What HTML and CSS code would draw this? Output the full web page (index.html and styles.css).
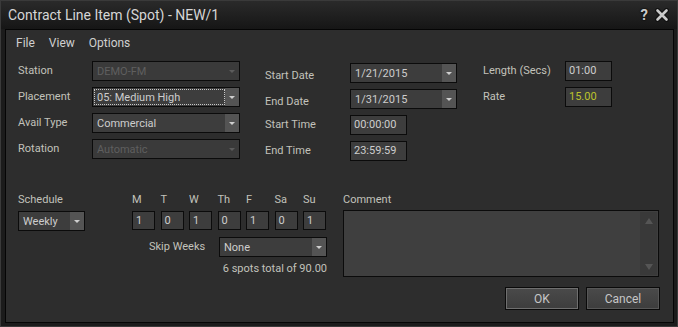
FILE: index.html
```html
<!DOCTYPE html>
<html lang="en">
<head>
    <meta charset="UTF-8">
    <title>Contract Line Item (Spot) - NEW/1</title>
    <link rel="stylesheet" href="styles.css">
</head>
<body>
    <div class="window">
        <div class="titlebar">
            <span class="title">Contract Line Item (Spot) - NEW/1</span>
            <div class="caption-btns">
                <span class="help">?</span>
                <svg class="close" width="14" height="14" viewBox="0 0 14 14">
                    <path d="M2.5 2.5 L11.5 11.5 M11.5 2.5 L2.5 11.5" stroke="#111" stroke-width="5" stroke-linecap="round"/>
                    <path d="M2.5 2.5 L11.5 11.5 M11.5 2.5 L2.5 11.5" stroke="#c9c9c9" stroke-width="2.6" stroke-linecap="round"/>
                </svg>
            </div>
        </div>
        <div class="client">
            <div class="menu">
                <span>File</span>
                <span>View</span>
                <span>Options</span>
            </div>

            <div class="fields">
                <div class="grid grid-a">
                    <span class="lbl">Station</span>
                    <div class="combo disabled"><span class="val">DEMO-FM</span><span class="arrow"></span></div>
                    <span class="lbl">Placement</span>
                    <div class="combo"><span class="val focus">05: Medium High</span><span class="arrow"></span></div>
                    <span class="lbl">Avail Type</span>
                    <div class="combo"><span class="val">Commercial</span><span class="arrow"></span></div>
                    <span class="lbl">Rotation</span>
                    <div class="combo disabled"><span class="val">Automatic</span><span class="arrow"></span></div>
                </div>
                <div class="grid grid-b">
                    <span class="lbl low">Start Date</span>
                    <div class="combo"><span class="val">1/21/2015</span><span class="arrow"></span></div>
                    <span class="lbl low">End Date</span>
                    <div class="combo"><span class="val">1/31/2015</span><span class="arrow"></span></div>
                    <span class="lbl">Start Time</span>
                    <div class="textbox time">00:00:00</div>
                    <span class="lbl">End Time</span>
                    <div class="textbox time">23:59:59</div>
                </div>
                <div class="grid grid-c">
                    <span class="lbl">Length (Secs)</span>
                    <div class="textbox">01:00</div>
                    <span class="lbl">Rate</span>
                    <div class="textbox rate">15.00</div>
                </div>
            </div>

            <div class="lower">
                <div class="schedule">
                    <span class="lbl">Schedule</span>
                    <div class="combo"><span class="val">Weekly</span><span class="arrow"></span></div>
                </div>
                <div class="days">
                    <div class="day-grid">
                        <span class="lbl">M</span><span class="lbl">T</span><span class="lbl">W</span><span class="lbl">Th</span><span class="lbl">F</span><span class="lbl">Sa</span><span class="lbl">Su</span>
                        <div class="textbox day">1</div>
                        <div class="textbox day">0</div>
                        <div class="textbox day">1</div>
                        <div class="textbox day">0</div>
                        <div class="textbox day">1</div>
                        <div class="textbox day">0</div>
                        <div class="textbox day">1</div>
                    </div>
                    <div class="skip">
                        <span class="lbl">Skip Weeks</span>
                        <div class="combo"><span class="val">None</span><span class="arrow"></span></div>
                    </div>
                    <div class="spots">6 spots total of 90.00</div>
                </div>
                <div class="comment">
                    <span class="lbl">Comment</span>
                    <div class="memo">
                        <div class="scroll">
                            <span class="up"></span>
                            <span class="down"></span>
                        </div>
                    </div>
                </div>
            </div>

            <div class="actions">
                <button class="btn default">OK</button>
                <button class="btn">Cancel</button>
            </div>
        </div>
    </div>
</body>
</html>
```

FILE: styles.css
```css
* {
    box-sizing: border-box;
}
html, body {
    margin: 0;
    padding: 0;
    background: #000;
}
body {
    font-family: Roboto, "Liberation Sans", sans-serif;
    font-size: 11px;
    color: #c2c2bb;
}
.window {
    width: 678px;
    height: 327px;
    background: #1b1b1b;
    border: 1px solid #3a3a3a;
    padding: 0 3px 3px 4px;
    display: flex;
    flex-direction: column;
}
.titlebar {
    height: 28px;
    margin: 0 -3px 0 -4px;
    padding: 0 8px 0 7px;
    background: linear-gradient(#2a2a2a, #161616);
    display: flex;
    align-items: center;
    justify-content: space-between;
}
.title {
    font-size: 14px;
    color: #d6d6d6;
}
.caption-btns {
    display: flex;
    align-items: center;
    gap: 7px;
}
.help {
    font-size: 15px;
    font-weight: bold;
    color: #c9c9c9;
    text-shadow: 0 0 2px #000, 0 0 1px #000;
}
.client {
    flex: 1;
    background: #2d2d2d;
    border: 1px solid #050505;
    display: flex;
    flex-direction: column;
}
.menu {
    height: 26px;
    padding-left: 10px;
    display: flex;
    align-items: center;
    gap: 14px;
    font-size: 12px;
    color: #d0d0d0;
}
.lbl {
    line-height: 14px;
    white-space: nowrap;
}
.fields {
    display: flex;
    align-items: flex-start;
    margin-top: 5px;
    padding-left: 12px;
}
.grid {
    display: grid;
    grid-auto-rows: 20px;
    row-gap: 6px;
    align-items: center;
}
.grid-a {
    grid-template-columns: 74px 148px;
    margin-right: 25px;
}
.grid-b {
    grid-template-columns: 85px 107px;
    margin-top: 2px;
    margin-right: 26px;
}
.grid-b .lbl.low {
    align-self: start;
    padding-top: 6px;
}
.grid-c {
    grid-template-columns: 82px 47px;
}
.textbox, .combo {
    height: 20px;
    border: 1px solid #0b0b0b;
    background: #3d3d3d;
    color: #cdcdcd;
    line-height: 18px;
    white-space: nowrap;
}
.textbox {
    padding-left: 3px;
}
.textbox.time {
    width: 57px;
}
.textbox.rate {
    color: #bcc22c;
}
.combo {
    display: flex;
}
.combo .val {
    flex: 1;
    padding-left: 2px;
    margin: 1px 0 1px 1px;
    line-height: 16px;
    border: 1px solid transparent;
    overflow: hidden;
}
.combo .val.focus {
    border: 1px dotted #c8c8c8;
}
.combo .arrow {
    width: 14px;
    background: #545454;
    display: flex;
    align-items: center;
    justify-content: center;
}
.combo .arrow::after {
    content: "";
    border-left: 3px solid transparent;
    border-right: 3px solid transparent;
    border-top: 3px solid #cfcfcf;
}
.combo.disabled {
    background: #3a3a3a;
    color: #5f5f5f;
}
.combo.disabled .arrow {
    background: transparent;
}
.combo.disabled .arrow::after {
    border-top-color: #5c5c5c;
}
.lower {
    display: flex;
    align-items: flex-start;
    margin-top: 32px;
    padding-left: 12px;
}
.schedule {
    width: 67px;
    display: flex;
    flex-direction: column;
    gap: 4px;
}
.days {
    width: 195px;
    margin-left: 47px;
    display: flex;
    flex-direction: column;
}
.day-grid {
    display: grid;
    grid-template-columns: repeat(7, 23px);
    column-gap: 5.5px;
    row-gap: 4px;
}
.textbox.day {
    height: 19px;
    line-height: 17px;
}
.skip {
    display: flex;
    align-items: center;
    margin-top: 7px;
    padding-left: 17px;
}
.skip .lbl {
    width: 70px;
}
.skip .combo {
    width: 108px;
}
.spots {
    margin-top: 5px;
    line-height: 14px;
    text-align: right;
}
.comment {
    width: 316px;
    margin-left: 16px;
    display: flex;
    flex-direction: column;
    gap: 3px;
}
.memo {
    height: 67px;
    border: 1px solid #0b0b0b;
    background: #3f3f3f;
    display: flex;
    justify-content: flex-end;
}
.scroll {
    width: 17px;
    margin: 1px;
    background: #393939;
    display: flex;
    flex-direction: column;
    justify-content: space-between;
    align-items: center;
    padding: 6px 0 5px;
}
.scroll .up, .scroll .down {
    border-left: 4px solid transparent;
    border-right: 4px solid transparent;
}
.scroll .up {
    border-bottom: 6px solid #555;
}
.scroll .down {
    border-top: 6px solid #555;
}
.actions {
    display: flex;
    justify-content: flex-end;
    gap: 7px;
    margin-top: 10px;
    padding-right: 13px;
}
.btn {
    width: 74px;
    height: 23px;
    border: 1px solid #0a0a0a;
    background: linear-gradient(#4a4a4a, #3d3d3d);
    box-shadow: inset 0 0 0 1px #575757;
    color: #c6c6c6;
    font-family: Roboto, "Liberation Sans", sans-serif;
    font-size: 12px;
    padding: 0;
}
.btn.default {
    box-shadow: inset 0 0 0 1px #6f6f6f;
}
```
